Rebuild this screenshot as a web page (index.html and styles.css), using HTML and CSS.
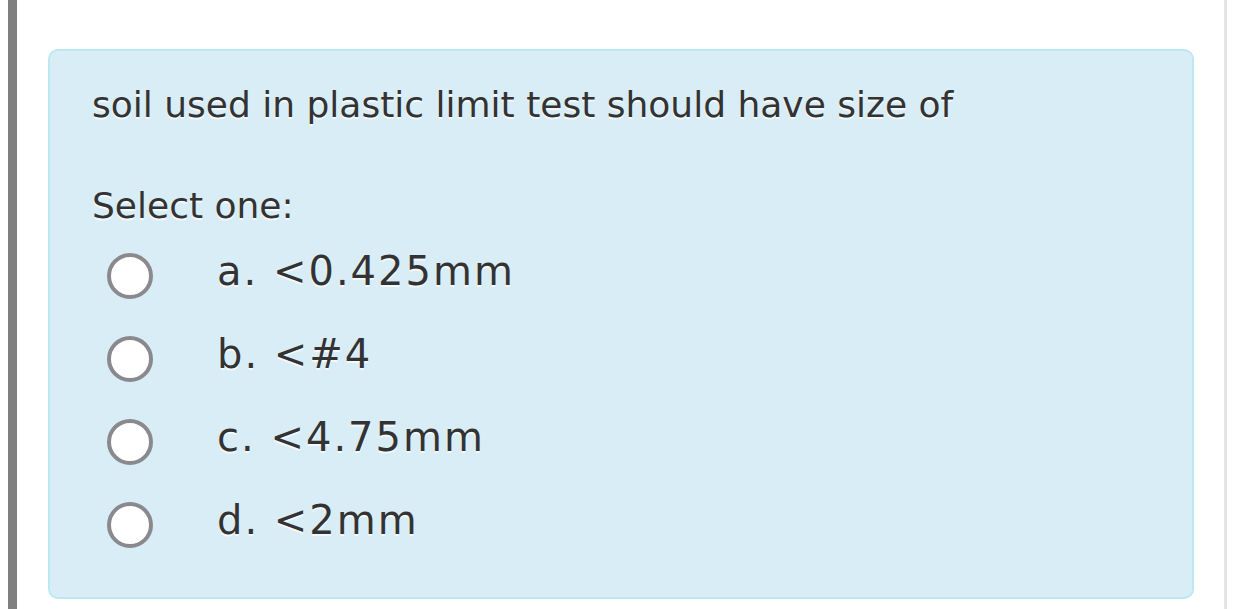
FILE: index.html
```html
<!DOCTYPE html>
<html>
<head>
<meta charset="utf-8">
<link rel="stylesheet" href="styles.css">
</head>
<body>
<div class="page">
  <div class="question">
    <div class="qtext">soil used in plastic limit test should have size of</div>
    <div class="prompt">Select one:</div>
    <div class="answers">
      <label class="answer"><span class="radio"></span><span class="label">a. &lt;0.425mm</span></label>
      <label class="answer"><span class="radio"></span><span class="label">b. &lt;#4</span></label>
      <label class="answer"><span class="radio"></span><span class="label">c. &lt;4.75mm</span></label>
      <label class="answer"><span class="radio"></span><span class="label">d. &lt;2mm</span></label>
    </div>
  </div>
</div>
</body>
</html>
```
FILE: styles.css
```css
html, body {
  margin: 0;
  padding: 0;
  background: #ffffff;
}
body {
  font-family: "DejaVu Sans", Verdana, sans-serif;
  font-size: 36px;
  line-height: 45px;
  color: #333333;
}
.page {
  margin-left: 8px;
  width: 1219px;
  height: 609px;
  border-left: 9px solid #7f7f7f;
  border-right: 3px solid #e4e4e4;
  padding: 49px 30px 0 31px;
  box-sizing: border-box;
  overflow: hidden;
}
.question {
  background: #d9edf7;
  border: 2px solid #bce8f1;
  border-radius: 10px;
  height: 550px;
  box-sizing: border-box;
  padding: 31px 42px 0 42px;
  text-shadow: 0 2px 1px rgba(255, 255, 255, 0.7);
}
.prompt {
  margin-top: 56px;
}
.answers {
  margin-top: 6px;
  display: flex;
  flex-direction: column;
}
.answer {
  height: 83px;
  display: flex;
  align-items: center;
}
.radio {
  width: 46px;
  height: 46px;
  box-sizing: border-box;
  border: 4px solid #8a8a8e;
  border-radius: 50%;
  background: #ffffff;
  margin-left: 15px;
  flex: none;
}
.label {
  margin-left: 64px;
  margin-top: -8px;
  font-size: 40px;
  letter-spacing: 2px;
}
```
